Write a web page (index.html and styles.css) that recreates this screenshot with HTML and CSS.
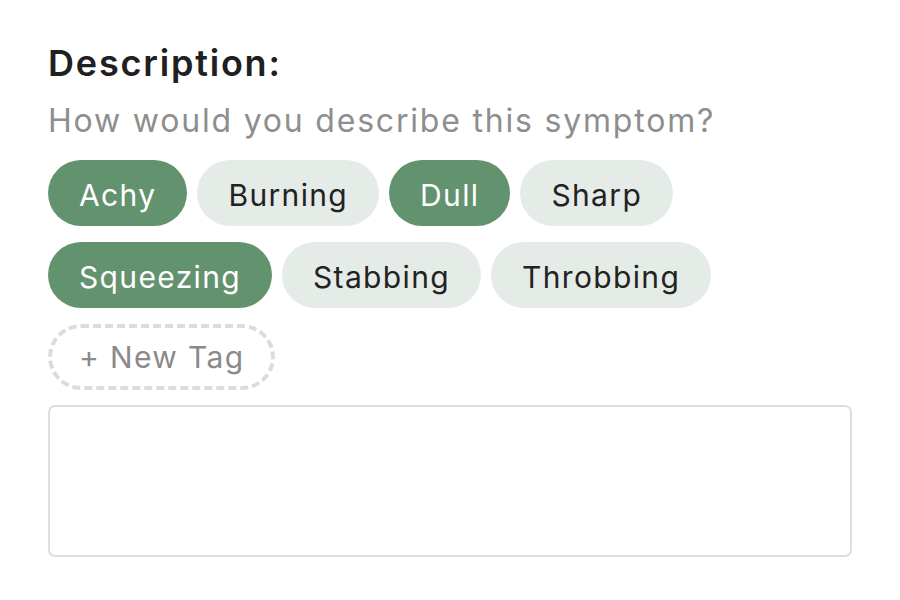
FILE: index.html
```html
<!DOCTYPE html>
<html lang="en">
<head>
    <meta charset="UTF-8">
    <meta name="viewport" content="width=device-width, initial-scale=1.0">
    <title>Description</title>
    <link rel="stylesheet" href="styles.css">
</head>
<body>
    <section class="field">
        <h2 class="field-title">Description:</h2>
        <p class="field-hint">How would you describe this symptom?</p>

        <div class="tags">
            <div class="tag-row">
                <span class="tag selected">Achy</span>
                <span class="tag">Burning</span>
                <span class="tag selected">Dull</span>
                <span class="tag">Sharp</span>
            </div>
            <div class="tag-row">
                <span class="tag selected">Squeezing</span>
                <span class="tag">Stabbing</span>
                <span class="tag">Throbbing</span>
            </div>
            <div class="tag-row">
                <span class="tag new-tag">+ New Tag</span>
            </div>
        </div>

        <textarea class="notes"></textarea>
    </section>
</body>
</html>
```

FILE: styles.css
```css
body {
    margin: 0;
    padding: 0;
    background-color: #ffffff;
    font-family: "Inter", "Open Sans", sans-serif;
    color: #222;
}

.field {
    padding: 43px 48px 40px;
    width: 804px;
}

.field-title {
    font-size: 36px;
    font-weight: 600;
    line-height: 40px;
    letter-spacing: 1.8px;
    margin: 0;
    color: #202020;
}

.field-hint {
    font-size: 32px;
    line-height: 40px;
    letter-spacing: 1.8px;
    margin: 18px 0 19px;
    color: #8e8e8e;
}

.tags {
    display: flex;
    flex-direction: column;
    gap: 16px;
}

.tag-row {
    display: flex;
    gap: 10px;
}

.tag {
    display: inline-flex;
    align-items: center;
    height: 66px;
    padding: 4px 31px 0;
    box-sizing: border-box;
    border-radius: 33px;
    background-color: #e5ebe7;
    color: #222;
    font-size: 30px;
    letter-spacing: 1.35px;
}

.tag.selected {
    background-color: #63926e;
    color: #fff;
}

.tag.new-tag {
    background-color: transparent;
    border: 4px dashed #dcdcdc;
    color: #8a8a8a;
    padding: 0 27px;
}

.notes {
    display: block;
    width: 804px;
    height: 152px;
    margin-top: 15px;
    box-sizing: border-box;
    border: 2px solid #dedede;
    border-radius: 7px;
    resize: none;
    font-family: inherit;
}
```
